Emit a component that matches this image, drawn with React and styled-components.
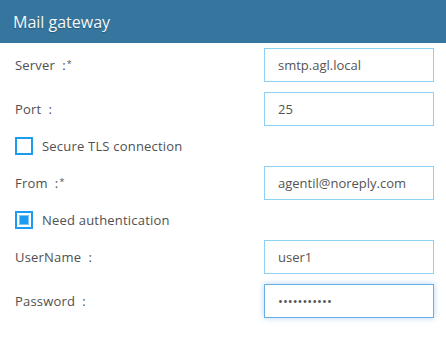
import styled, { createGlobalStyle } from 'styled-components';

const GlobalStyle = createGlobalStyle`
  body {
    margin: 0;
    background: #fff;
    font-family: "Open Sans", "Noto Sans", sans-serif;
  }
`;

const Panel = styled.div`
  width: 446px;
  height: 338px;
  background: #fff;
`;

const Header = styled.div`
  height: 43px;
  background: #35759e;
  display: flex;
  align-items: center;
  padding-left: 13px;
  box-sizing: border-box;
  color: #f4f7fa;
  font-size: 16px;
  text-shadow: 0 1px 1px rgba(0, 0, 0, 0.25);
`;

const Form = styled.div`
  display: flex;
  flex-direction: column;
  gap: 10px;
  padding: 5px 12px 0 15px;
`;

const Row = styled.div`
  display: flex;
  align-items: center;
  justify-content: space-between;
  height: 34px;
`;

const Label = styled.span`
  font-size: 13px;
  letter-spacing: 0.2px;
  color: #505050;
`;

const Req = styled.sup`
  font-size: 9px;
  vertical-align: 3px;
  margin-left: 1px;
`;

const Input = styled.input`
  width: 170px;
  height: 34px;
  box-sizing: border-box;
  border: 1px solid ${(p) => (p.$focused ? '#6aaee6' : '#8fd0f5')};
  box-shadow: ${(p) => (p.$focused ? '0 0 6px rgba(90,160,230,0.45)' : 'none')};
  outline: none;
  padding: 0 13px;
  font-family: inherit;
  font-size: 13px;
  color: #555;
  background: #fff;
`;

const CheckRow = styled.label`
  display: flex;
  align-items: center;
  gap: 9px;
  height: 20px;
`;

const Box = styled.span`
  width: 18px;
  height: 18px;
  box-sizing: border-box;
  border: 2px solid #1b9cf2;
  display: flex;
  align-items: center;
  justify-content: center;
  &::after {
    content: '';
    display: ${(p) => (p.$checked ? 'block' : 'none')};
    width: 10px;
    height: 10px;
    box-sizing: border-box;
    background: #1b9cf2;
    border: 1px solid #7ec8f7;
  }
`;

const Field = ({ label, required, value, type, focused }) => (
  <Row>
    <Label>
      {label}&nbsp; :{required && <Req>*</Req>}
    </Label>
    <Input type={type || 'text'} defaultValue={value} $focused={focused} />
  </Row>
);

const Check = ({ label, checked }) => (
  <CheckRow>
    <Box $checked={checked} />
    <Label>{label}</Label>
  </CheckRow>
);

export default function App() {
  return (
    <Panel>
      <GlobalStyle />
      <Header>Mail gateway</Header>
      <Form>
        <Field label="Server" required value="smtp.agl.local" />
        <Field label="Port" value="25" />
        <Check label="Secure TLS connection" />
        <Field label="From" required value="agentil@noreply.com" />
        <Check label="Need authentication" checked />
        <Field label="UserName" value="user1" />
        <Field label="Password" value="secretpassw" type="password" focused />
      </Form>
    </Panel>
  );
}
